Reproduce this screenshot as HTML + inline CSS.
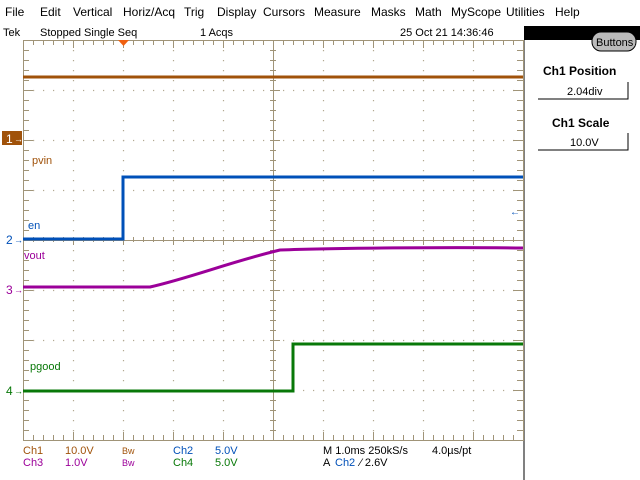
<!DOCTYPE html>
<html><head><style>
body{margin:0;width:640px;height:480px;background:#fff;overflow:hidden;font-family:"Liberation Sans",sans-serif;}
svg{position:absolute;left:0;top:0}
</style></head><body>
<svg width="640" height="480" xmlns="http://www.w3.org/2000/svg" font-family="Liberation Sans, sans-serif" font-size="11">
<rect width="640" height="480" fill="#fff"/>
<g font-size="12" fill="#000">
<text x="5" y="16">File</text><text x="40" y="16">Edit</text><text x="73" y="16">Vertical</text><text x="123" y="16">Horiz/Acq</text><text x="184" y="16">Trig</text><text x="217" y="16">Display</text><text x="263" y="16">Cursors</text><text x="314" y="16">Measure</text><text x="371" y="16">Masks</text><text x="415" y="16">Math</text><text x="451" y="16">MyScope</text><text x="506" y="16">Utilities</text><text x="555" y="16">Help</text>
</g>
<g font-size="11" fill="#000">
<text x="3" y="36">Tek</text><text x="40" y="36">Stopped  Single Seq</text><text x="200" y="36">1 Acqs</text><text x="400" y="36">25 Oct 21 14:36:46</text>
</g>
<rect x="524" y="26" width="116" height="14" fill="#000"/>
<rect x="592" y="32" width="44" height="19" rx="9" fill="#bbb" stroke="#000"/>
<text x="596" y="46" font-size="11">Buttons</text>
<g font-weight="bold" font-size="12"><text x="543" y="75">Ch1 Position</text><text x="552" y="127">Ch1 Scale</text></g>
<path d="M538 99H628V82M538 150H628V133" stroke="#000" fill="none"/>
<text x="567" y="95" font-size="11">2.04div</text><text x="570" y="146" font-size="11">10.0V</text>
<line x1="524" y1="40" x2="524" y2="480" stroke="#000"/>
<g stroke="#a09478" fill="none">
<rect x="23.5" y="40.5" width="500" height="400"/>
<line x1="273.5" y1="40" x2="273.5" y2="440"/><line x1="23" y1="240.5" x2="523" y2="240.5"/>
<path id="tk" d="M33.5 40v5M43.5 40v5M53.5 40v5M63.5 40v5M73.5 40v8M83.5 40v5M93.5 40v5M103.5 40v5M113.5 40v5M123.5 40v8M133.5 40v5M143.5 40v5M153.5 40v5M163.5 40v5M173.5 40v8M183.5 40v5M193.5 40v5M203.5 40v5M213.5 40v5M223.5 40v8M233.5 40v5M243.5 40v5M253.5 40v5M263.5 40v5M283.5 40v5M293.5 40v5M303.5 40v5M313.5 40v5M323.5 40v8M333.5 40v5M343.5 40v5M353.5 40v5M363.5 40v5M373.5 40v8M383.5 40v5M393.5 40v5M403.5 40v5M413.5 40v5M423.5 40v8M433.5 40v5M443.5 40v5M453.5 40v5M463.5 40v5M473.5 40v8M483.5 40v5M493.5 40v5M503.5 40v5M513.5 40v5"/>
<use href="#tk" transform="translate(0,480) scale(1,-1)"/>
<use href="#tk" transform="translate(0,197)"/>
<path d="M23 50.5h6M23 60.5h6M23 70.5h6M23 80.5h6M23 90.5h10M23 100.5h6M23 110.5h6M23 120.5h6M23 130.5h6M23 140.5h10M23 150.5h6M23 160.5h6M23 170.5h6M23 180.5h6M23 190.5h10M23 200.5h6M23 210.5h6M23 220.5h6M23 230.5h6M23 250.5h6M23 260.5h6M23 270.5h6M23 280.5h6M23 290.5h10M23 300.5h6M23 310.5h6M23 320.5h6M23 330.5h6M23 340.5h10M23 350.5h6M23 360.5h6M23 370.5h6M23 380.5h6M23 390.5h10M23 400.5h6M23 410.5h6M23 420.5h6M23 430.5h6" id="vt"/>
<use href="#vt" transform="translate(546,0) scale(-1,1)"/>
<use href="#vt" transform="translate(247,0)"/>
</g>
<g stroke="#a09478" stroke-width="1.2" stroke-dasharray="1.2 8.8" fill="none" opacity="0.8">
<path d="M73.5 50V440M123.5 50V440M173.5 50V440M223.5 50V440M323.5 50V440M373.5 50V440M423.5 50V440M473.5 50V440"/>
<path d="M33 90.5H523M33 140.5H523M33 190.5H523M33 290.5H523M33 340.5H523M33 390.5H523"/>
</g>
<g fill="none" stroke-width="3">
<path d="M23 77H523" stroke="#a0520a"/>
<path d="M23 239H123V177H523" stroke="#0050b8"/>
<path d="M23 287H150C190 278 230 262 280 250C330 248 450 247 523 248" stroke="#9b0099"/>
<path d="M23 391H293V344H523" stroke="#087808"/>
</g>
<rect x="2" y="131" width="20" height="14" fill="#a0520a"/>
<text x="6" y="143" fill="#fff" font-size="12">1</text><text x="14" y="142" fill="#fff" font-size="9">→</text>
<text x="6" y="244" fill="#0050b8" font-size="12">2</text><text x="14" y="243" fill="#0050b8" font-size="9">→</text>
<text x="6" y="294" fill="#9b0099" font-size="12">3</text><text x="14" y="293" fill="#9b0099" font-size="9">→</text>
<text x="6" y="395" fill="#087808" font-size="12">4</text><text x="14" y="394" fill="#087808" font-size="9">→</text>
<text x="510" y="215" fill="#0050b8" font-size="10">←</text>
<path d="M118 40h11l-5.5 6z" fill="#f06010"/>
<text x="32" y="164" fill="#a0520a">pvin</text>
<text x="28" y="229" fill="#0050b8">en</text>
<text x="24" y="259" fill="#9b0099">vout</text>
<text x="30" y="370" fill="#087808">pgood</text>
<g font-size="11">
<text x="23" y="454" fill="#a0520a">Ch1</text><text x="65" y="454" fill="#a0520a">10.0V</text><text x="122" y="454" fill="#a0520a" font-size="9">Bw</text>
<text x="173" y="454" fill="#0050b8">Ch2</text><text x="215" y="454" fill="#0050b8">5.0V</text>
<text x="23" y="466" fill="#9b0099">Ch3</text><text x="65" y="466" fill="#9b0099">1.0V</text><text x="122" y="466" fill="#9b0099" font-size="9">Bw</text>
<text x="173" y="466" fill="#087808">Ch4</text><text x="215" y="466" fill="#087808">5.0V</text>
<text x="323" y="454">M 1.0ms 250kS/s</text><text x="432" y="454">4.0µs/pt</text>
<text x="323" y="466">A</text><text x="335" y="466" fill="#0050b8">Ch2</text><text x="360" y="466">⁄  2.6V</text>
</g>
</svg>
</body></html>
